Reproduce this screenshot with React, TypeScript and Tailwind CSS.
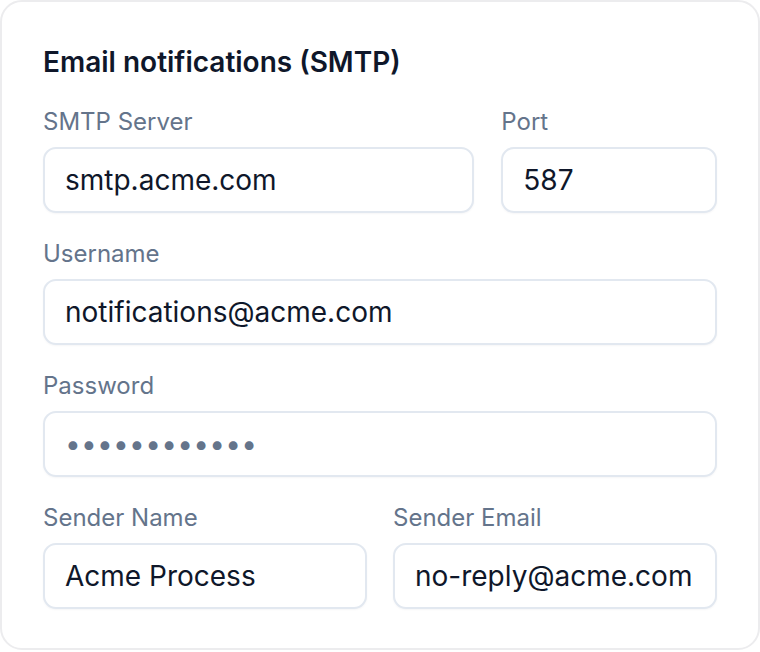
import React from "react";

function Field({
  label,
  value,
  className = "",
  secret = false,
}: {
  label: string;
  value: string;
  className?: string;
  secret?: boolean;
}) {
  return (
    <div className={`flex flex-col ${className}`}>
      <label className="text-[24px] leading-[28px] text-[#64748b] mb-[11px]">{label}</label>
      <div className="flex h-[66px] items-center rounded-[13px] border-2 border-[#e2e8f0] bg-white px-[20px] shadow-[0_1px_2px_rgba(15,23,42,0.04)]">
        {secret ? (
          <span className="text-[28px] tracking-[0.01em] text-[#64748b]">{value}</span>
        ) : (
          <span className="text-[28px] text-[#0f172a] whitespace-nowrap">{value}</span>
        )}
      </div>
    </div>
  );
}

export default function App() {
  return (
    <div className="min-h-[652px] w-[760px] bg-white" style={{ fontFamily: "Inter, 'Noto Sans', sans-serif" }}>
      <div className="rounded-[22px] border-2 border-[#ececee] bg-white px-[41px] pt-[44px] pb-[39px]">
        <h2 className="text-[28px] leading-[32px] font-semibold text-[#0f172a]">Email notifications (SMTP)</h2>
        <div className="mt-[30px] flex flex-col gap-[27px]">
          <div className="grid grid-cols-[2fr_1fr] gap-x-[27px]">
            <Field label="SMTP Server" value="smtp.acme.com" />
            <Field label="Port" value="587" />
          </div>
          <Field label="Username" value="notifications@acme.com" />
          <Field label="Password" value="••••••••••••" secret />
          <div className="grid grid-cols-2 gap-x-[26px]">
            <Field label="Sender Name" value="Acme Process" />
            <Field label="Sender Email" value="no-reply@acme.com" />
          </div>
        </div>
      </div>
    </div>
  );
}
